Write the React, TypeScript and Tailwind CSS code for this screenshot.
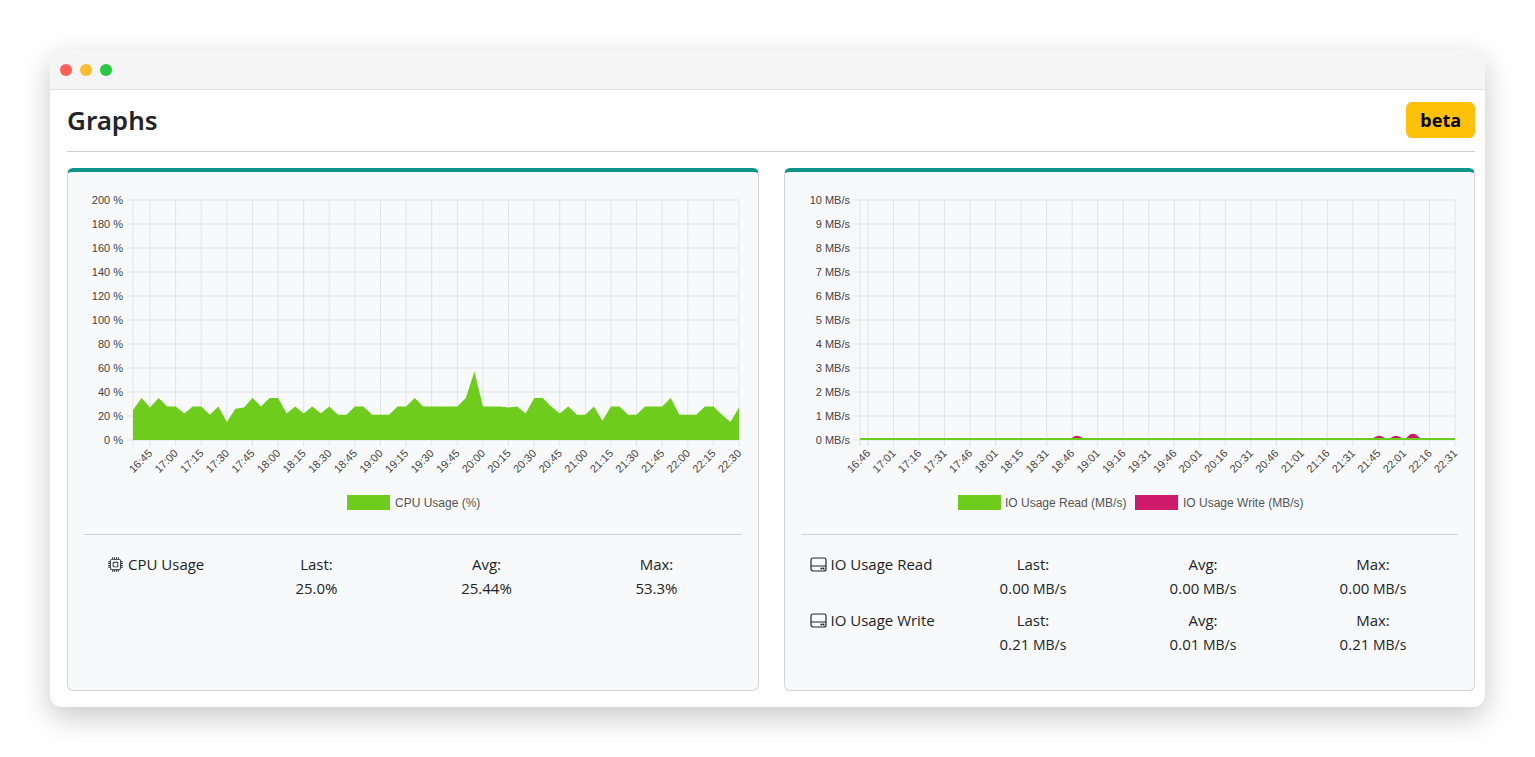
import React from "react";
import { BsCpu } from "react-icons/bs";

const cpu = [25,35,27,35,28,28,22,28,28,21,28,15,26,27,35,28,35,35,22,28,22,28,22,28,21,21,28,28,21,21,21,28,28,35,28,28,28,28,28,35,57,28,28,28,27,28,22,35,35,28,22,28,21,21,28,16,28,28,21,21,28,28,28,35,21,21,21,28,28,21,15,27];
const cpuLabels = ["16:45","17:00","17:15","17:30","17:45","18:00","18:15","18:30","18:45","19:00","19:15","19:30","19:45","20:00","20:15","20:30","20:45","21:00","21:15","21:30","21:45","22:00","22:15","22:30"];
const ioLabels = ["16:46","17:01","17:16","17:31","17:46","18:01","18:15","18:31","18:46","19:01","19:16","19:31","19:46","20:01","20:16","20:31","20:46","21:01","21:16","21:31","21:45","22:01","22:16","22:31"];

type ChartProps = {
  x0: number; x1: number; firstTick: number; yLabels: string[]; xLabels: string[];
  children: React.ReactNode; legend: React.ReactNode;
};

function Chart({ x0, x1, firstTick, yLabels, xLabels, children, legend }: ChartProps) {
  const top = 28, bottom = 268;
  const step = (x1 - firstTick) / (xLabels.length - 1);
  return (
    <svg width="691" height="355" className="block" style={{ fontFamily: '"Liberation Sans", Arial, sans-serif' }}>
      {yLabels.map((l, i) => {
        const y = top + i * 24;
        return (
          <g key={l}>
            <line x1={x0 - 6} x2={x1} y1={y} y2={y} stroke="#e2e3e6" />
            <text x={x0 - 10} y={y + 4} fontSize="11" fill="#444" textAnchor="end">{l}</text>
          </g>
        );
      })}
      <line x1={x0} x2={x0} y1={top} y2={bottom + 6} stroke="#e2e3e6" />
      {xLabels.map((l, i) => {
        const x = firstTick + i * step;
        return (
          <g key={l}>
            <line x1={x} x2={x} y1={top} y2={bottom + 6} stroke="#e2e3e6" />
            <text x={x + 3} y={bottom + 14} fontSize="11" fill="#444" textAnchor="end" transform={`rotate(-45 ${x + 3} ${bottom + 14})`}>{l}</text>
          </g>
        );
      })}
      {children}
      {legend}
    </svg>
  );
}

function CpuChart() {
  const x0 = 65, x1 = 671;
  const pts = cpu.map((v, i) => `${x0 + (i * (x1 - x0)) / (cpu.length - 1)},${268 - v * 1.2}`);
  const d = `M${x0},268 L${pts.join(" L")} L${x1},268 Z`;
  return (
    <Chart x0={x0} x1={x1} firstTick={82} xLabels={cpuLabels}
      yLabels={["200 %","180 %","160 %","140 %","120 %","100 %","80 %","60 %","40 %","20 %","0 %"]}
      legend={<g><rect x="279" y="323" width="43" height="15" fill="#6ecc1c" /><text x="327" y="335" fontSize="12" fill="#555">CPU Usage (%)</text></g>}>
      <path d={d} fill="#6ecc1c" />
    </Chart>
  );
}

function IoChart() {
  const x0 = 75, x1 = 670;
  const spike = (cx: number, h: number) => `M${cx - 9},268 L${cx - 3},${268 - h} Q${cx},${268 - h - 1.5} ${cx + 3},${268 - h} L${cx + 9},268 Z`;
  return (
    <Chart x0={x0} x1={x1} firstTick={83} xLabels={ioLabels}
      yLabels={["10 MB/s","9 MB/s","8 MB/s","7 MB/s","6 MB/s","5 MB/s","4 MB/s","3 MB/s","2 MB/s","1 MB/s","0 MB/s"]}
      legend={<g>
        <rect x="173" y="323" width="43" height="15" fill="#6ecc1c" /><text x="220" y="335" fontSize="12" fill="#555">IO Usage Read (MB/s)</text>
        <rect x="350" y="323" width="43" height="15" fill="#cf1a6c" /><text x="398" y="335" fontSize="12" fill="#555">IO Usage Write (MB/s)</text>
      </g>}>
      <path d={`${spike(292, 3.5)} ${spike(594, 3.5)} ${spike(611, 3.5)} ${spike(628, 5.5)}`} fill="#cf1a6c" />
      <line x1={x0} x2={x1} y1={267} y2={267} stroke="#6ecc1c" strokeWidth="2" />
    </Chart>
  );
}

function Hdd() {
  return (
    <svg width="17" height="15" viewBox="0 0 17 15" fill="none" stroke="#212529" strokeWidth="1.2">
      <rect x="1" y="1" width="15" height="13" rx="2" />
      <line x1="1" y1="9" x2="16" y2="9" />
      <circle cx="11.5" cy="11.5" r="0.5" fill="#212529" />
      <circle cx="13.5" cy="11.5" r="0.5" fill="#212529" />
    </svg>
  );
}

function Stat({ label, value, unit }: { label: string; value: string; unit?: string }) {
  return (
    <div className="flex flex-col items-center">
      <div className="h-6 leading-6">{label}</div>
      <div className="h-6 leading-6">{value}{unit && <span className="text-[14px]"> {unit}</span>}</div>
    </div>
  );
}

export default function App() {
  return (
    <div className="w-[1535px] h-[757px] bg-white relative" style={{ fontFamily: '"Open Sans", "Noto Sans", sans-serif' }}>
      <div className="absolute left-[50px] top-[50px] w-[1435px] h-[657px] rounded-[12px] bg-white overflow-hidden shadow-[0_10px_30px_rgba(0,0,0,0.22)] flex flex-col">
        <div className="h-[40px] bg-[#f5f5f5] border-b border-[#e3e3e3] flex items-center gap-[8px] pl-[10px] shrink-0">
          <span className="w-[12px] h-[12px] rounded-full bg-[#ff5f57]" />
          <span className="w-[12px] h-[12px] rounded-full bg-[#febc2e]" />
          <span className="w-[12px] h-[12px] rounded-full bg-[#28c840]" />
        </div>
        <div className="pl-[17px] pr-[10px] pb-[15px] flex flex-col">
          <div className="flex items-center justify-between h-[62px] border-b border-[#cfcfcf]">
            <h1 className="text-[26px] font-semibold text-[#212529]" style={{ fontFamily: '"Noto Sans", sans-serif' }}>Graphs</h1>
            <span className="bg-[#ffc107] rounded-[6px] text-[18px] font-bold text-black px-[14px] h-[36px] leading-[36px] -mt-[1px]" style={{ fontFamily: '"Noto Sans", sans-serif' }}>beta</span>
          </div>
          <div className="grid grid-cols-2 gap-[25px] mt-[16px] text-[15px] text-[#212529]">
            <div className="h-[523px] bg-[#f8f9fa] border border-[#d3d5d8] border-t-4 border-t-[#0e9488] rounded-[6px] overflow-hidden">
              <CpuChart />
              <div className="mx-[16px] mt-[7px] border-t border-[#cfd1d4] pt-[17px]">
                <div className="grid grid-cols-[1fr_170px_170px_170px]">
                  <div className="flex gap-[5px] pl-[24px] h-6 items-center"><BsCpu className="text-[15px]" />CPU Usage</div>
                  <Stat label="Last:" value="25.0%" />
                  <Stat label="Avg:" value="25.44%" />
                  <Stat label="Max:" value="53.3%" />
                </div>
              </div>
            </div>
            <div className="h-[523px] bg-[#f8f9fa] border border-[#d3d5d8] border-t-4 border-t-[#0e9488] rounded-[6px] overflow-hidden">
              <IoChart />
              <div className="mx-[16px] mt-[7px] border-t border-[#cfd1d4] pt-[17px] flex flex-col gap-[8px]">
                {[["IO Usage Read","0.00","0.00","0.00"],["IO Usage Write","0.21","0.01","0.21"]].map(r => (
                  <div key={r[0]} className="grid grid-cols-[1fr_170px_170px_170px]">
                    <div className="flex gap-[4px] pl-[9px] h-6 items-center"><Hdd />{r[0]}</div>
                    <Stat label="Last:" value={r[1]} unit="MB/s" />
                    <Stat label="Avg:" value={r[2]} unit="MB/s" />
                    <Stat label="Max:" value={r[3]} unit="MB/s" />
                  </div>
                ))}
              </div>
            </div>
          </div>
        </div>
      </div>
    </div>
  );
}
